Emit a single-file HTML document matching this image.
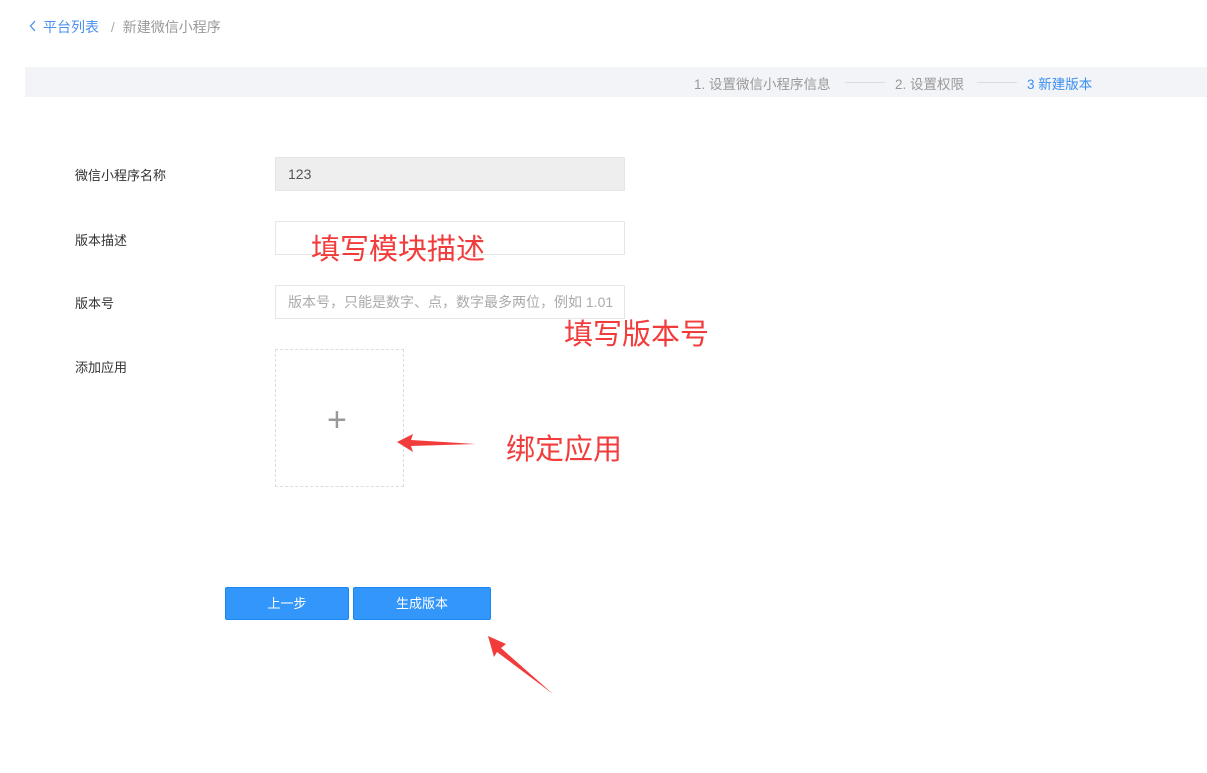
<!DOCTYPE html>
<html><head><meta charset="utf-8"><style>
body{margin:0;width:1207px;height:773px;background:#fff;font-family:"Liberation Sans","Noto Sans CJK SC",sans-serif;position:relative;overflow:hidden}
.a{position:absolute;white-space:nowrap}
.lab{font-size:13px;color:#333}
.inp{position:absolute;left:275px;width:350px;height:34px;border:1px solid #e6e6e6;box-sizing:border-box;font-size:14px;line-height:32px;padding-left:12px}
.btn{position:absolute;top:587px;height:33px;background:#3396fb;border:1px solid #1a87f5;box-sizing:border-box;color:#fff;font-size:13px;line-height:31px;text-align:center;border-radius:2px}
.red{color:#f23c3c;font-size:29px}
</style></head><body>
<svg class="a" style="left:29px;top:20px" width="8" height="12"><path d="M6 1 L1.5 6 L6 11" stroke="#4a90f0" stroke-width="1.3" fill="none"/></svg>
<div class="a" style="left:43px;top:17px;font-size:14px;color:#4a90f0">平台列表 <span style="color:#aaa;margin:0 8px">/</span><span style="color:#999">新建微信小程序</span></div>
<div class="a" style="left:25px;top:67px;width:1182px;height:30px;background:#f3f4f7"></div>
<div class="a" style="left:694px;top:73px;font-size:13.5px;color:#999">1. 设置微信小程序信息</div>
<div class="a" style="left:845px;top:82px;width:40px;height:1px;background:#ddd"></div>
<div class="a" style="left:895px;top:73px;font-size:13.5px;color:#999">2. 设置权限</div>
<div class="a" style="left:977px;top:82px;width:40px;height:1px;background:#ddd"></div>
<div class="a" style="left:1027px;top:73px;font-size:13.5px;color:#3a8ef0">3 新建版本</div>
<div class="a lab" style="left:75px;top:165px">微信小程序名称</div>
<div class="inp" style="top:157px;background:#eee;color:#555">123</div>
<div class="a lab" style="left:75px;top:230px">版本描述</div>
<div class="inp" style="top:221px"></div>
<div class="a lab" style="left:75px;top:293px">版本号</div>
<div class="inp" style="top:285px;color:#aaa">版本号，只能是数字、点，数字最多两位，例如 1.01</div>
<div class="a lab" style="left:75px;top:357px">添加应用</div>
<div class="a" style="left:275px;top:349px;width:127px;height:136px;border:1px dashed #ddd"></div>
<div class="a" style="left:327px;top:400px;font-size:34px;color:#999;font-weight:300;line-height:40px">+</div>
<div class="a red" style="left:311px;top:226px">填写模块描述</div>
<div class="a red" style="left:564px;top:311px">填写版本号</div>
<div class="a red" style="left:506px;top:426px">绑定应用</div>
<svg class="a" style="left:0;top:0" width="1207" height="773"><polygon points="397,442 413,434 411,440 476,444 411,446 413,452" fill="#f23c3c"/><polygon points="488,636 506,644 501,648 553,694 497,652 494,657" fill="#f23c3c"/></svg>
<div class="btn" style="left:225px;width:124px">上一步</div>
<div class="btn" style="left:353px;width:138px">生成版本</div>
</body></html>
